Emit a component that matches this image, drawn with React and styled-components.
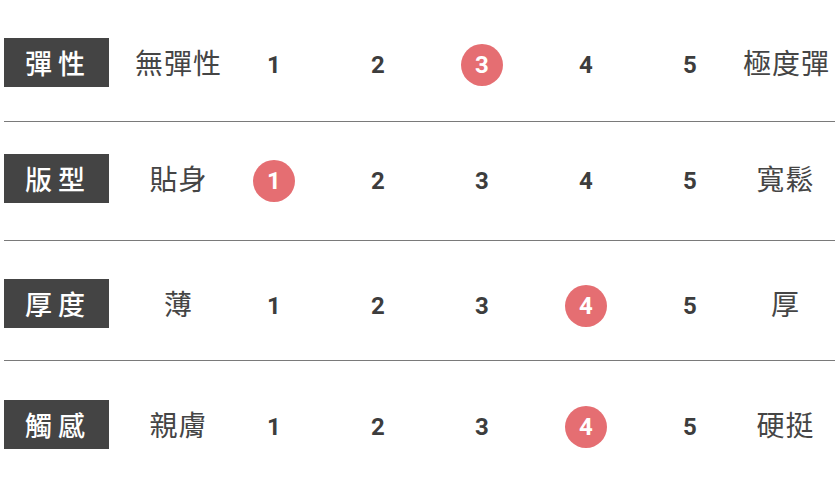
import React from "react";
import styled, { createGlobalStyle } from "styled-components";

const Global = createGlobalStyle`
  html, body { margin: 0; padding: 0; background: #fff; }
  body { font-family: "Noto Sans CJK TC", "Noto Sans", sans-serif; }
`;

const Table = styled.div`
  margin-left: 4px;
  width: 831px;
  display: flex;
  flex-direction: column;
`;

const Section = styled.div`
  display: flex;
  align-items: center;
  padding-top: ${(p) => p.$top}px;
  padding-bottom: ${(p) => p.$bottom}px;
  border-bottom: ${(p) => (p.$last ? "none" : "1px solid #7a7a7a")};
`;

const Label = styled.div`
  width: 105px;
  height: 49px;
  flex: none;
  background: #444444;
  color: #fff;
  display: flex;
  align-items: center;
  justify-content: center;
  font-family: "Noto Sans CJK TC", sans-serif;
  font-size: 27px;
  font-weight: 500;
  letter-spacing: 6px;
  padding-left: 3px;
  box-sizing: border-box;
`;

const Side = styled.div`
  width: ${(p) => p.$w}px;
  margin-left: ${(p) => p.$ml || 0}px;
  flex: none;
  text-align: center;
  white-space: nowrap;
  color: #454545;
  font-family: "Noto Sans CJK TC", sans-serif;
  font-size: 28px;
  letter-spacing: 1px;
  text-indent: 1px;
  line-height: 49px;
`;

const Num = styled.div`
  width: 104px;
  flex: none;
  display: flex;
  justify-content: center;
  align-items: center;
  height: 49px;
`;

const Digit = styled.span`
  width: 42px;
  height: 42px;
  border-radius: 50%;
  display: flex;
  align-items: center;
  justify-content: center;
  font-family: Roboto, "Liberation Sans", sans-serif;
  font-weight: 700;
  font-size: 24px;
  margin-top: 4px;
  color: ${(p) => (p.$on ? "#fff" : "#3d3d3d")};
  background: ${(p) => (p.$on ? "#e56e72" : "transparent")};
`;

const rows = [
  { label: "彈性", left: "無彈性", right: "極度彈", val: 3, top: 38, bottom: 34 },
  { label: "版型", left: "貼身", right: "寬鬆", val: 1, top: 32, bottom: 37 },
  { label: "厚度", left: "薄", right: "厚", val: 4, top: 38, bottom: 32 },
  { label: "觸感", left: "親膚", right: "硬挺", val: 4, top: 39, bottom: 20 },
];

export default function App() {
  return (
    <>
      <Global />
      <Table>
        {rows.map((r, i) => (
          <Section key={r.label} $top={r.top} $bottom={r.bottom} $last={i === rows.length - 1}>
            <Label>{r.label}</Label>
            <Side $w={88} $ml={25}>{r.left}</Side>
            {[1, 2, 3, 4, 5].map((n) => (
              <Num key={n}>
                <Digit $on={n === r.val}>{n}</Digit>
              </Num>
            ))}
            <Side $w={86}>{r.right}</Side>
          </Section>
        ))}
      </Table>
    </>
  );
}
